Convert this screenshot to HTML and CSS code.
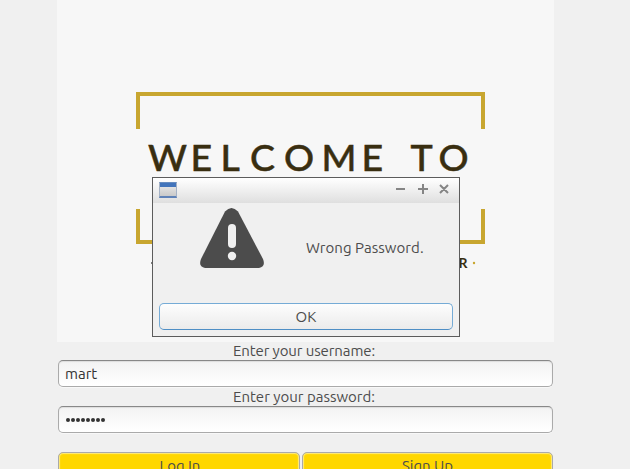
FILE: index.html
```html
<!DOCTYPE html>
<html lang="en">
<head>
<meta charset="utf-8">
<title>Login</title>
<link rel="stylesheet" href="styles.css">
</head>
<body>
<main class="login">
  <svg class="banner" width="497" height="342" viewBox="57 0 497 342">
    <path class="frame" d="M138 129V94H483V129M138 209V242H483V209"/>
    <text class="welcome" y="171" x="148 190.500 220.500 250 284 321.500 361.500 400 410.500 438.500">WELCOME TO</text>
    <text class="tagline" x="458.500" y="268">R</text>
    <circle cx="474" cy="263" r="1.200" fill="#c8a630"/>
    <circle cx="152" cy="263" r="1" fill="#555"/>
  </svg>
  <form class="form">
    <label class="label" for="user"><span class="user-label">Enter your username:</span></label>
    <input class="field" id="user" type="text" value="mart">
    <label class="label second" for="pass"><span class="pass-label">Enter your password:</span></label>
    <div class="field password" id="pass"><i></i><i></i><i></i><i></i><i></i><i></i><i></i><i></i></div>
    <div class="actions">
      <button class="action log-in" type="button">Log In</button>
      <button class="action wide" type="button">Sign Up</button>
    </div>
  </form>
</main>
<section class="dialog">
  <header class="titlebar">
    <span class="app-icon"></span>
    <svg class="controls" width="56" height="14" viewBox="0 0 56 14">
      <path d="M2 7H11M24 7H34M29 2V12M46 3L54 11M54 3L46 11"/>
    </svg>
  </header>
  <div class="message">
    <svg class="warning" width="64" height="60" viewBox="0 0 64 60">
      <path fill="#4c4c4c" d="M25 3.500Q31.500-3.500 38 3.500L63 51Q66 58.500 59 60H5Q-2 58.500 1 51Z"/>
      <rect x="28" y="16" width="8" height="24" rx="4" fill="#f0f0f0"/>
      <circle cx="32" cy="48" r="4.200" fill="#f0f0f0"/>
    </svg>
    <span class="message-text">Wrong Password.</span>
  </div>
  <button class="ok" type="button">OK</button>
</section>
</body>
</html>
```
FILE: styles.css
```css
* { box-sizing: border-box; }
body {
  margin: 0;
  height: 469px;
  overflow: hidden;
  position: relative;
  background: #f0f0f0;
  color: #4c4c4c;
  font: 15px/18px "Ubuntu", "Noto Sans", sans-serif;
}
button, input { font: inherit; color: inherit; }
.login { width: 497px; margin-left: 57px; }
.banner { display: block; background: #f7f7f7; }
.frame { fill: none; stroke: #c8a630; stroke-width: 4; }
.welcome { font: 500 37.5px "Lato", sans-serif; fill: #392e10; stroke: #392e10; stroke-width: 0.5; }
.tagline { font: 700 14px "Lato", sans-serif; fill: #392e10; }
.form { padding: 0 1px; display: flex; flex-direction: column; }
.label { height: 18px; text-align: center; white-space: nowrap; padding-right: 3px; }
.label.second { height: 19px; line-height: 19px; }
.user-label { letter-spacing: -0.1px; }
.field {
  height: 27px;
  width: 495px;
  padding: 0 6px;
  border: 1px solid #aaa;
  border-top-color: #888;
  border-radius: 5px;
  background: linear-gradient(#f3f3f3, #fff);
  box-shadow: inset 0 1px 1px #ddd, 0 1px #f8f8f8;
  color: #333;
  outline: none;
}
.password { display: flex; align-items: center; gap: 1px; padding-top: 1px; padding-left: 7px; }
.password i { width: 4px; height: 4px; border-radius: 50%; background: #333; }
.actions { display: flex; gap: 2px; margin-top: 19px; height: 27px; }
.action {
  width: 242px;
  padding: 0;
  border: 1px solid #aaa;
  border-radius: 5px;
  background: #ffd700;
  box-shadow: inset 0 0 1px 1px #ffec80;
}
.action.log-in { padding-left: 2px; }
.action.wide { width: 251px; }
.dialog {
  position: absolute;
  left: 152px;
  top: 177px;
  width: 308px;
  height: 160px;
  border: 1px solid #5c5c5c;
  background: #f0f0f0;
  display: flex;
  flex-direction: column;
}
.titlebar {
  height: 25px;
  padding: 0 9px 0 6px;
  display: flex;
  justify-content: space-between;
  align-items: center;
  background: linear-gradient(#fff, #dfdfdf);
}
.app-icon {
  width: 18px;
  height: 16px;
  margin-bottom: 1px;
  border: 1px solid #a5b2c5;
  border-top-color: #668cc0;
  border-bottom: 2px solid #5f82b8;
  background: linear-gradient(#4274bb 0 4px, #e2e2e2 4px, #c9c9c9);
}
.controls { fill: none; stroke: #858585; stroke-width: 2; margin-bottom: 3px; }
.message { height: 100px; padding: 5px 0 0 47px; display: flex; align-items: flex-start; }
.message-text { margin: 31px 0 0 42px; white-space: nowrap; letter-spacing: 0.05px; }
.ok {
  height: 27px;
  margin: 0 6px;
  border: 1px solid #75abd6;
  border-bottom-color: #4e8ec5;
  border-radius: 5px;
  background: linear-gradient(#fdfdfd, #ebebeb);
  padding: 0;
}
```
